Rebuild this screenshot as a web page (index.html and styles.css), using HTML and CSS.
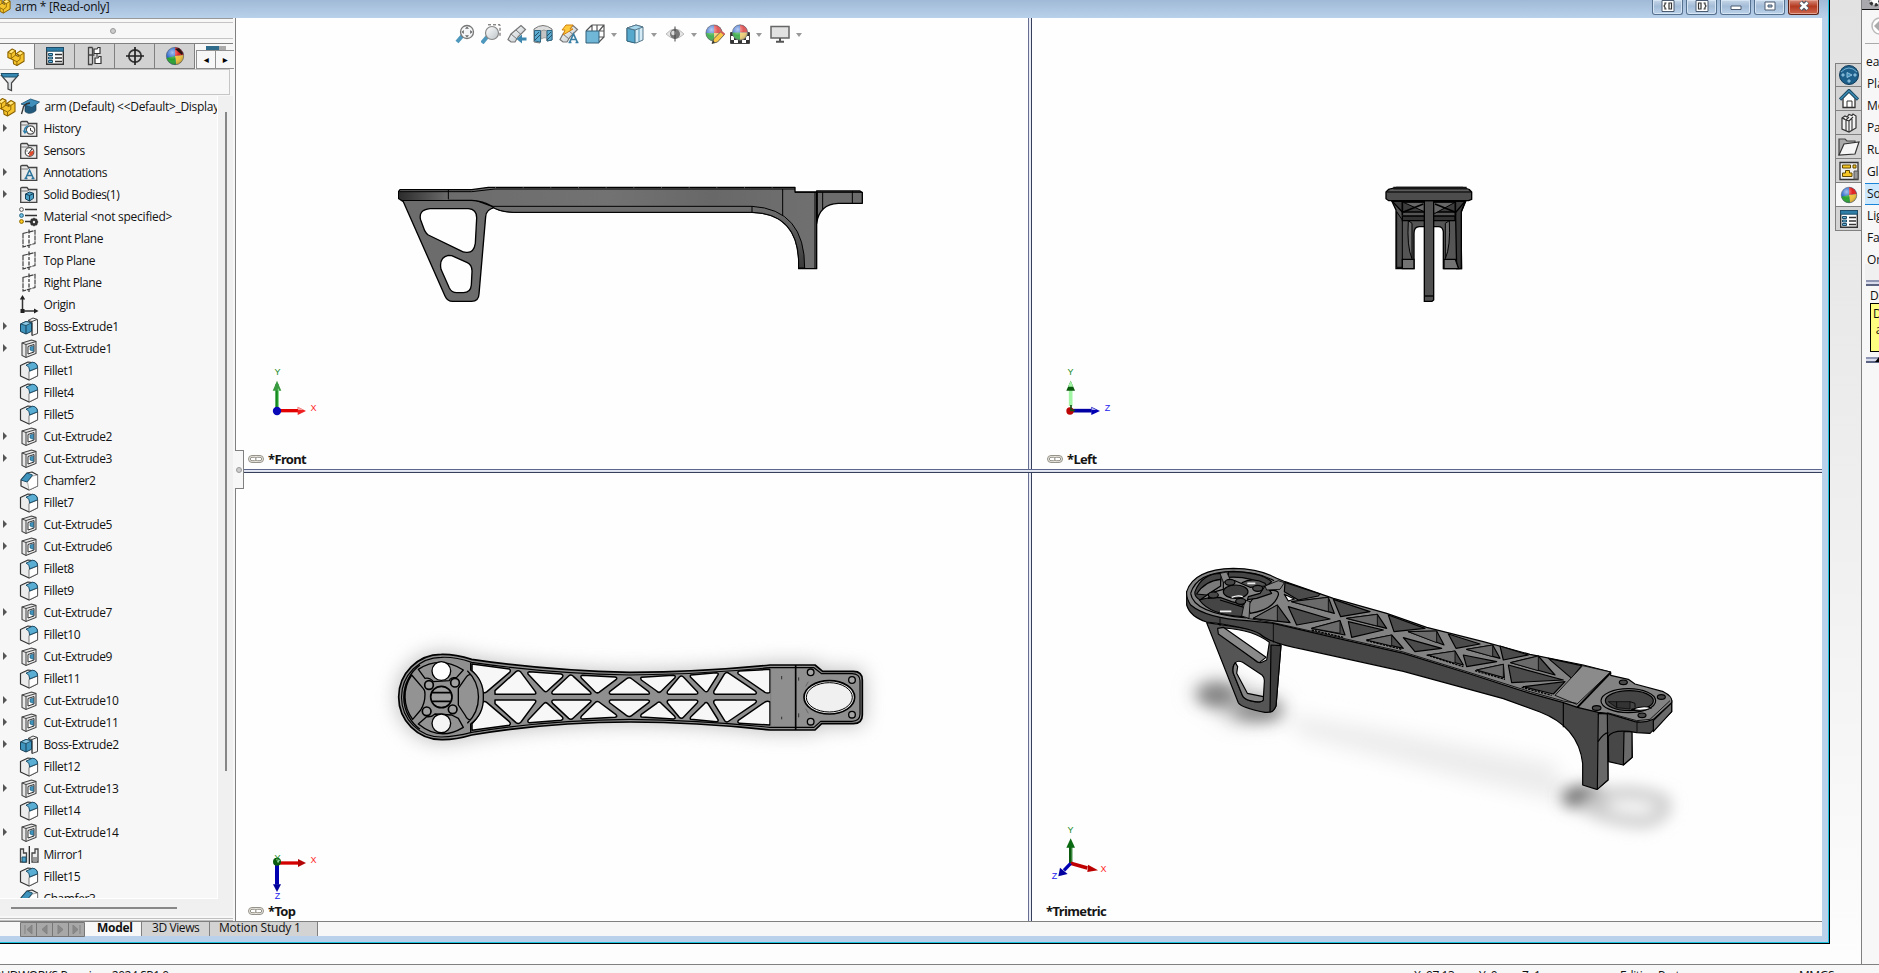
FILE: index.html
```html
<!DOCTYPE html>
<html lang="en">
<head>
<meta charset="utf-8">
<title>arm * [Read-only]</title>
<link rel="stylesheet" href="styles.css">
</head>
<body>
<svg class="defs" width="0" height="0">
  <defs>
    <linearGradient id="gBeam" x1="0" x2="1" y1="0" y2="0"><stop offset="0" stop-color="#6a6a6a"/><stop offset=".5" stop-color="#727272"/><stop offset=".75" stop-color="#686868"/><stop offset="1" stop-color="#707070"/></linearGradient>
    <linearGradient id="gHead" x1="0" x2="1" y1="0" y2="0"><stop offset="0" stop-color="#2c2c2c"/><stop offset="1" stop-color="#6c6c6c"/></linearGradient>
    <linearGradient id="gUnder" x1="0" x2="0" y1="0" y2="1"><stop offset="0" stop-color="#707070"/><stop offset="1" stop-color="#3a3a3a"/></linearGradient>
    <linearGradient id="gGlass" x1="0" x2="1" y1="0" y2="1"><stop offset="0" stop-color="#fff"/><stop offset="1" stop-color="#bcc4c8"/></linearGradient>
    <radialGradient id="gShine" cx=".35" cy=".3" r=".8"><stop offset="0" stop-color="#fff" stop-opacity=".6"/><stop offset=".5" stop-color="#fff" stop-opacity="0"/><stop offset="1" stop-color="#000" stop-opacity=".3"/></radialGradient>
    <filter id="soft" x="-30%" y="-60%" width="160%" height="220%"><feGaussianBlur stdDeviation="28"/></filter>
    <filter id="soft2" x="-60%" y="-60%" width="220%" height="220%"><feGaussianBlur stdDeviation="22"/></filter>

    <symbol id="part" viewBox="0 0 20 20"><path d="M2 5 6.500 1.500 10 3.300V8l3 1.500V8L10.800 6.500 15 3.500l4 2.200v8.800L11.500 19 8 17.200 7.500 13 2 10.500z" fill="#f5c42c" stroke="#8a6100" stroke-width="1.100" stroke-linejoin="round"/><path d="M2 5l3.500 1.700L10 3.300M5.500 6.700v5.500M11 6.700l3.800 1.800L19 5.700M14.800 8.500v4L11.500 15V19M5.500 11.500 10 8M11.500 15l-4-2" fill="none" stroke="#8a6100" stroke-width=".9"/><path d="M3.300 4.900l3.200-2.300 2 .9-3.100 2.200zM12.200 6.500l2.900-1.900 2.400 1.200-2.800 1.600z" fill="#ffe98a"/></symbol>
    <symbol id="cap" viewBox="0 0 20 20"><path d="M5 8.500v6c3 3 8 2 11-1V8z" fill="#215a7c" stroke="#163c55" stroke-width=".7"/><path d="M1 7 10.500 2 19.500 5 12 10.500z" fill="#3f8fba" stroke="#1b4e6e" stroke-width=".8"/><path d="M10 6Q3 7 3 12l-1.500 5" fill="none" stroke="#333" stroke-width="1.300"/></symbol>
    <symbol id="folder" viewBox="0 0 20 20"><path d="M1.700 17.300V3.200L3 2.500h5l1.500 2h8.300v12.800z" fill="#e9e9e9" stroke="#444" stroke-width="1.300"/><path d="M2 6h7l1-1.200" fill="none" stroke="#777"/></symbol>
    <symbol id="history" viewBox="0 0 20 20"><use href="#folder"/><circle cx="11.500" cy="11" r="4.200" fill="#fff" stroke="#555" stroke-width="1.200"/><path d="M11.500 9v2.500l2.500 1" stroke="#333" fill="none"/><path d="M5.500 12a5 5 0 0 1 4-5" fill="none" stroke="#2f81ab" stroke-width="1.500"/><path d="M3.500 11.500l2.300 3.500L9 12z" fill="#2f81ab"/></symbol>
    <symbol id="sensor" viewBox="0 0 20 20"><use href="#folder"/><circle cx="10.500" cy="11" r="4.300" fill="#fff" stroke="#555" stroke-width="1.200"/><path d="M10.500 11 14.500 9.500A4.300 4.300 0 0 1 10 15z" fill="#df4b2c"/><path d="M9 13l4-5M7.500 10h1" stroke="#222"/></symbol>
    <symbol id="anno" viewBox="0 0 20 20"><use href="#folder"/><path d="M6.500 15.500 10.500 7l4 8.500M8 12.500h5M5.500 15.500h3M12.500 15.500h3" fill="none" stroke="#2a7299" stroke-width="1.500"/></symbol>
    <symbol id="bodies" viewBox="0 0 20 20"><use href="#folder"/><path d="M6.500 9l4-2 4 1.300v5L10.500 16l-4-2z" fill="#4aa0c6" stroke="#163f55"/><path d="M6.500 9l4 1.500 4-2M10.500 10.500V16" fill="none" stroke="#163f55"/></symbol>
    <symbol id="material" viewBox="0 0 20 20"><path d="M6 2.500h12M6 8.500h12M6 14.500h6" stroke="#333" stroke-width="1.500"/><circle cx="2.500" cy="2.500" r="1.900" fill="#fff" stroke="#555"/><circle cx="2.500" cy="8.500" r="1.900" fill="#6fc0e4" stroke="#286785"/><circle cx="2.500" cy="14.500" r="1.900" fill="#ffc91f" stroke="#8c6a00"/><circle cx="15" cy="15" r="2.700" fill="none" stroke="#333" stroke-width="2.300"/><path d="M15 10.800v8.400M10.800 15h8.400M12 12l6 6M18 12l-6 6" stroke="#333" stroke-width="1.300"/><circle cx="15" cy="15" r="1.200" fill="#eee"/></symbol>
    <symbol id="plane" viewBox="0 0 20 20"><path d="M4 4.500 16 1.500v13L4 18z" fill="#fafafa" stroke="#444" stroke-width="1.200" stroke-dasharray="5 .8"/><path d="M10 .5V19" stroke="#333" stroke-width="1.200" stroke-dasharray="4 1.500 3 1.500"/></symbol>
    <symbol id="origin" viewBox="0 0 20 20"><path d="M3.500 3v13H17" fill="none" stroke="#333" stroke-width="1.500"/><path d="M3.500 0 .8 4.500h5.400zM19.500 16 15 13.400v5.200zM1.500 14h4v4h-4z" fill="#222"/></symbol>
    <symbol id="boss" viewBox="0 0 20 20"><path d="M9 3.500l5-2.500 4.500 1.500v14L13 18.500V6z" fill="#f4f4f4" stroke="#444"/><path d="M13 4.500v14M9 3.500l4 1 5-2" fill="none" stroke="#444"/><path d="M1.500 7 7 4.500l5.500 1.300v8.500L7 17l-5.500-2.500z" fill="#3f94bd" stroke="#173f56"/><path d="M1.500 7 7 8.500l5.500-2.700L7 4.500z" fill="#8ccae6" stroke="#173f56" stroke-width=".8"/><path d="M7 8.500V17" stroke="#173f56"/></symbol>
    <symbol id="cut" viewBox="0 0 20 20"><path d="M3 4 12.500 1 17 2.500v12L7 18.500 3 16.500z" fill="#e8e8e8" stroke="#444" stroke-width="1.100"/><path d="M3 4l4 1.500v13M7 5.500l10-3" fill="none" stroke="#444"/><path d="M9 7.500l6-2v7.500l-6 2z" fill="#fff" stroke="#333"/><path d="M11 8l3.500-1v5.500L11 11z" fill="#3f94bd" stroke="#1d516d" stroke-width=".6"/></symbol>
    <symbol id="fillet" viewBox="0 0 20 20"><path d="M1.500 4.500 9 1l6 .8c3 1.200 3.500 3 3.500 5v8L10 19l-8.500-4z" fill="#ececec" stroke="#333" stroke-width="1.200" stroke-linejoin="round"/><path d="M10 10.500V19l8.500-4.200V7z" fill="#fff" stroke="#444" stroke-width=".7"/><path d="M7 4.200 13.500 1.200C17 1.500 18.500 4 18.500 6.800L10.500 10C10.500 7 9.500 5 7 4.200z" fill="#5baed3" stroke="#1d516d"/></symbol>
    <symbol id="chamfer" viewBox="0 0 20 20"><path d="M2 9 8 2l5-1 5.500 3v11L10 19l-8-4z" fill="#efefef" stroke="#333" stroke-width="1.200" stroke-linejoin="round"/><path d="M8.500 11 13.500 5l5-1v11L10 19z" fill="#fff" stroke="#777" stroke-width=".6"/><path d="M2 9 8 2l5.500 2L8 11z" fill="#3f94bd" stroke="#1d516d"/></symbol>
    <symbol id="mirror" viewBox="0 0 20 20"><path d="M1.500 4h3v4h3v9h-6zM19 4h-3v4h-3v9h6z" fill="#eee" stroke="#444" stroke-width="1.300"/><path d="M3 12h4v5H3z" fill="#4aa0c6" stroke="#1d516d"/><path d="M14 12h4v5h-4z" fill="#999"/><path d="M10.300 1v18" stroke="#111" stroke-width="1.200"/></symbol>
    <symbol id="sheet" viewBox="0 0 20 20"><path d="M1.700 1.700h16.600v16.600H1.700z" fill="#fff" stroke="#333" stroke-width="1.400"/><path d="M1.500 1.500h17v3.700h-17z" fill="#2f7ea8" stroke="#1d4d68"/><path d="M3.500 7.500h4v2h-4zM3.500 11h4v2h-4zM3.500 14.500h4v2h-4z" fill="#6bb6da" stroke="#1d4d68"/><path d="M10 8.500h7M10 12h7M10 15.500h7" stroke="#333" stroke-width="1.400"/></symbol>
    <symbol id="ball" viewBox="0 0 20 20"><circle cx="10" cy="10" r="8.700" fill="#2463cc"/><path d="M10 10V1.300A8.700 8.700 0 0 1 18.600 9z" fill="#e21e1e"/><path d="M10 10l8.700-1A8.700 8.700 0 0 1 11 18.600z" fill="#f0c23a"/><path d="M10 10l1 8.600A8.700 8.700 0 0 1 1.500 12z" fill="#27a22e"/><circle cx="10" cy="10" r="8.700" fill="url(#gShine)" stroke="#555" stroke-width=".5"/></symbol>
    <symbol id="ball2" viewBox="0 0 20 20"><circle cx="10" cy="10" r="9" fill="#4f7fd6"/><path d="M10 10V1A9 9 0 0 1 19 10z" fill="#e25656"/><path d="M10 10h9A9 9 0 0 1 10 19z" fill="#f0d27c"/><path d="M10 10v9A9 9 0 0 1 1 10z" fill="#46b254"/><circle cx="10" cy="10" r="9" fill="url(#gShine)" stroke="#666" stroke-width=".7"/></symbol>
    <symbol id="link" viewBox="0 0 48 24"><rect x="1.500" y="1.500" width="45" height="21" rx="10.500" fill="#e8e6df" stroke="#96938a" stroke-width="3"/><rect x="7" y="7" width="18" height="10" rx="5" fill="#fff" stroke="#96938a" stroke-width="3"/><rect x="23" y="7" width="18" height="10" rx="5" fill="#fff" stroke="#96938a" stroke-width="3"/></symbol>
    <symbol id="cyl" viewBox="0 0 20 20"><path d="M1 15.500 4 10 14 1.500l4.500 4L11 13l-3 5H4z" fill="url(#gGlass)" stroke="#777" stroke-width="1.200"/><path d="M4 10l6 5M9 6l5 4.500" stroke="#777"/></symbol>
  </defs>
</svg>

<div class="desktop">
  <div class="upper">
    <div class="doc">
      <header class="titlebar">
        <svg class="t-icon" width="18" height="18"><use href="#part"/></svg>
        <span class="t-text">arm * [Read-only]</span>
        <div class="winbtns">
          <span class="wb"><svg width="14" height="12" viewBox="0 0 14 12"><path d="M1 .5h12v11H1z" fill="#fff" stroke="#4a5a70"/><path d="M5.500 3H4v1.500L3 6l1 1.500V9h1.500M8 3h2.500v6H8z" fill="none" stroke="#333" stroke-width="1.200"/></svg></span>
          <span class="wb"><svg width="14" height="12" viewBox="0 0 14 12"><path d="M1 .5h12v11H1z" fill="#fff" stroke="#4a5a70"/><path d="M8.500 3H10v1.500L11 6l-1 1.500V9H8.500M3.500 3H6v6H3.500z" fill="none" stroke="#333" stroke-width="1.200"/></svg></span>
          <span class="wb"><svg width="12" height="12"><path d="M1 6h10v3.500H1z" fill="#fff" stroke="#4a5a70"/></svg></span>
          <span class="wb"><svg width="12" height="12"><path d="M1 2h10v8H1zM4 5h4v2H4z" fill="#fff" fill-rule="evenodd" stroke="#4a5a70"/></svg></span>
          <span class="wb close"><svg width="12" height="12"><path d="M2.500 2 9.500 9.500M9.500 2 2.500 9.500" stroke="#4c5868" stroke-width="4.500"/><path d="M2.500 2.500 9.500 9M9.500 2.500 2.500 9" stroke="#fff" stroke-width="2.600"/></svg></span>
        </div>
      </header>

      <div class="body">
        <aside class="side">
          <div class="grip top"><i></i></div>
          <nav class="tabs">
            <span class="tab on"><svg width="19" height="20"><use href="#part"/></svg></span>
            <span class="tab"><svg width="20" height="20"><use href="#sheet"/></svg></span>
            <span class="tab"><svg width="20" height="20" viewBox="0 0 20 20"><path d="M3.500 1.500h4M3.500 1v17.500h4M3.500 9h6M7.500 1.500v16.500" fill="none" stroke="#444" stroke-width="1.300"/><path d="M9 3h3l1-1.500h2v6H9zM10 12h3l1-1.500h2v7h-6z" fill="#fff" stroke="#333" stroke-width="1.200"/><path d="M12 8v3" stroke="#333"/></svg></span>
            <span class="tab"><svg width="20" height="20" viewBox="0 0 20 20"><circle cx="10" cy="10" r="6.200" fill="none" stroke="#333" stroke-width="1.700"/><path d="M10 1v18M1 10h18" stroke="#222" stroke-width="1.700"/></svg></span>
            <span class="tab"><svg width="20" height="20" viewBox="0 0 20 20"><use href="#ball"/><path d="M10 3l4-1 4 5-1 2z" fill="#2a1512"/></svg></span>
            <span class="tab rest"><i class="peek"></i><b>◂</b><b>▸</b></span>
          </nav>
          <div class="filter"><svg width="20" height="20" viewBox="0 0 20 20"><path d="M1.500 3.500 8 11v6l3.500 1.500V11L18 3.500z" fill="url(#gGlass)" stroke="#444" stroke-width="1.200"/><path d="M1 1.500h17.500L17 5H3z" fill="#3689b2" stroke="#1d516d"/></svg></div>
          <div class="treewrap">
            <ul class="tree">
              <li class="root"><svg><use href="#part"/></svg><svg><use href="#cap"/></svg><span>arm (Default) &lt;&lt;Default&gt;_Display</span></li>
              <li class="ex"><svg><use href="#history"/></svg>History</li>
              <li><svg><use href="#sensor"/></svg>Sensors</li>
              <li class="ex"><svg><use href="#anno"/></svg>Annotations</li>
              <li class="ex"><svg><use href="#bodies"/></svg>Solid Bodies(1)</li>
              <li class="mat"><svg><use href="#material"/></svg>Material &lt;not specified&gt;</li>
              <li><svg><use href="#plane"/></svg>Front Plane</li>
              <li><svg><use href="#plane"/></svg>Top Plane</li>
              <li><svg><use href="#plane"/></svg>Right Plane</li>
              <li><svg><use href="#origin"/></svg>Origin</li>
              <li class="ex"><svg><use href="#boss"/></svg>Boss-Extrude1</li>
              <li class="ex"><svg><use href="#cut"/></svg>Cut-Extrude1</li>
              <li><svg><use href="#fillet"/></svg>Fillet1</li>
              <li><svg><use href="#fillet"/></svg>Fillet4</li>
              <li><svg><use href="#fillet"/></svg>Fillet5</li>
              <li class="ex"><svg><use href="#cut"/></svg>Cut-Extrude2</li>
              <li class="ex"><svg><use href="#cut"/></svg>Cut-Extrude3</li>
              <li><svg><use href="#chamfer"/></svg>Chamfer2</li>
              <li><svg><use href="#fillet"/></svg>Fillet7</li>
              <li class="ex"><svg><use href="#cut"/></svg>Cut-Extrude5</li>
              <li class="ex"><svg><use href="#cut"/></svg>Cut-Extrude6</li>
              <li><svg><use href="#fillet"/></svg>Fillet8</li>
              <li><svg><use href="#fillet"/></svg>Fillet9</li>
              <li class="ex"><svg><use href="#cut"/></svg>Cut-Extrude7</li>
              <li><svg><use href="#fillet"/></svg>Fillet10</li>
              <li class="ex"><svg><use href="#cut"/></svg>Cut-Extrude9</li>
              <li><svg><use href="#fillet"/></svg>Fillet11</li>
              <li class="ex"><svg><use href="#cut"/></svg>Cut-Extrude10</li>
              <li class="ex"><svg><use href="#cut"/></svg>Cut-Extrude11</li>
              <li class="ex"><svg><use href="#boss"/></svg>Boss-Extrude2</li>
              <li><svg><use href="#fillet"/></svg>Fillet12</li>
              <li class="ex"><svg><use href="#cut"/></svg>Cut-Extrude13</li>
              <li><svg><use href="#fillet"/></svg>Fillet14</li>
              <li class="ex"><svg><use href="#cut"/></svg>Cut-Extrude14</li>
              <li><svg><use href="#mirror"/></svg>Mirror1</li>
              <li><svg><use href="#fillet"/></svg>Fillet15</li>
              <li><svg><use href="#chamfer"/></svg>Chamfer3</li>
            </ul>
            <div class="vbar"><i></i></div>
          </div>
          <div class="hbar"><i></i></div>
          <div class="grip bottom"></div>
        </aside>

        <main class="views">
          <section class="pane">
            <svg class="model" style="left:144px;top:152px" width="500" height="150" viewBox="0 0 1500 450" stroke="#000" stroke-width="4" stroke-linejoin="round">
              <path d="M70 95 195 378Q202 394 218 394H275Q296 394 297 372L317 140Q318 118 345 112L280 88H60zM150 116H265Q291 118 290 145L286 220Q282 247 262 247 250 248 240 241L145 195Q138 190 134 182L122 150Q114 120 150 116zM215 257 262 278Q277 286 276 305L274 345Q272 368 250 368H230Q215 368 208 354L183 298Q176 262 205 256z" fill="#6c6c6c" fill-rule="evenodd"/>
              <path d="M56 64 60 59H275L325 52H1245V66H1310V296H1256V270Q1250 130 1116 127H400Q355 125 335 108 305 92 275 91H70L56 86z" fill="url(#gBeam)"/>
              <path d="M57 66H205V90H66L57 84z" fill="url(#gHead)" stroke="none"/>
              <path d="M335 109H1116Q1275 118 1274 294H1256V270Q1250 130 1116 127H400Q355 125 335 109z" fill="url(#gUnder)" stroke-width="3"/>
              <path d="M1310 63H1440L1447 68V100H1375Q1318 102 1310 160z" fill="#6c6c6c"/>
              <path d="M58 65H275L345 57H1245M205 60V88M1208 57V136M1245 67H1447M1305 67V294M1312 67V150M1328 67V118M1417 63V100M1116 109V127" fill="none" stroke-width="3"/>
              <path d="M345 53H1240" stroke="#888" stroke-width="2" stroke-dasharray="3 80" fill="none"/>
            </svg>
            <svg class="triad" style="left:31px;top:348px" width="56" height="56" viewBox="0 0 168 168"><path d="M30 55V130" stroke="#138a1c" stroke-width="10"/><path d="M30 44 17 74h26z" fill="#3a9a3f"/><path d="M34 68V125" stroke="#8de093" stroke-width="3"/><path d="M32 134H95" stroke="#e30000" stroke-width="10"/><path d="M117 135 92 122v25z" fill="#e22"/><path d="M93 123l17 9H93z" fill="#f6a0a0"/><circle cx="30" cy="135" r="12.500" fill="#0909b8"/></svg>
            <span class="ax g" style="left:38px;top:348px">Y</span><span class="ax r" style="left:74px;top:384px">X</span>
            <div class="label"><svg width="16" height="8"><use href="#link"/></svg><b>*Front</b></div>
          </section>
          <div class="vs"></div>
          <section class="pane">
            <svg class="model" style="left:308px;top:152px" width="180" height="150" viewBox="0 0 540 450" stroke="#000" stroke-width="4">
              <path d="M155 92H378L362 130 365 296H310V185Q308 170 295 170H238Q222 170 222 190V296H168V120z" fill="#555"/>
              <path d="M346 92H376L364 125V296H350z" fill="#3a3a3a"/><path d="M170 125 187 150V292H170z" fill="#4e4e4e" stroke-width="3"/>
              <path d="M187 268H222V296H187zM312 268H346L356 296H312z" fill="#727272"/>
              <path d="M187 138H345V152H187z" fill="#333"/><path d="M205 152Q200 230 216 266V160zM328 152Q332 230 316 266V160z" fill="#6b6b6b" stroke-width="3"/>
              <path d="M157 94 187 126H255V94zM375 94 348 126H280V94z" fill="#3d3d3d"/><path d="M190 97H345L285 130 255 126z" fill="#686868" stroke-width="3"/><path d="M190 126 250 102M345 126 285 102M187 94V136M346 94V136" fill="none" stroke-width="5"/>
              <path d="M253 92H281V390L276 394H253z" fill="#505050"/><path d="M253 378H281" fill="none"/>
              <path d="M138 66 146 58 170 52H368L388 59 395 66V88L386 92H146L138 86z" fill="#4d4d4d"/>
              <path d="M160 55H380" stroke="#151515" stroke-width="9" fill="none"/><path d="M140 66H393" stroke-width="3"/><path d="M150 60H386" stroke="#888" stroke-width="1.500"/>
            </svg>
            <svg class="triad" style="left:28px;top:348px" width="56" height="56" viewBox="0 0 168 168"><path d="M32 60V120" stroke="#a2f5a4" stroke-width="11"/><path d="M32 44 19 74h26z" fill="#0a5a0d"/><path d="M32 44l-8 18h16z" fill="#a2f5a4"/><path d="M34 134H95" stroke="#0000a5" stroke-width="11"/><path d="M120 135 94 122v25z" fill="#0000b5"/><path d="M95 124l14 8H95z" fill="#a9a9ee"/><circle cx="30" cy="135" r="11" fill="#bd0505"/><path d="M33 117v16h12" stroke="#174d17" stroke-width="5" fill="none"/></svg>
            <span class="ax g" style="left:35px;top:348px">Y</span><span class="ax b" style="left:72px;top:384px">Z</span>
            <div class="label"><svg width="16" height="8"><use href="#link"/></svg><b>*Left</b></div>
          </section>
          <div class="hs"></div>
          <section class="pane">
            <svg class="model" style="left:144px;top:167px" width="500" height="120" viewBox="0 0 1500 360" stroke="#000" stroke-width="4" stroke-linejoin="round">
              <path d="M184 43Q225 42 275 60 500 96 750 100 960 98 1170 75H1305L1328 94H1420Q1447 94 1447 120V225Q1447 251 1420 251H1325L1305 270H1170Q960 244 750 243 500 245 275 285 225 300 184 299A128 128 0 0 1 184 43z" fill="#888" stroke="#888" stroke-width="16" opacity=".5" filter="url(#soft)"/>
              <path d="M184 43Q225 42 275 58 500 92 750 97 960 96 1170 75H1305L1328 94H1420Q1447 94 1447 120V225Q1447 251 1420 251H1325L1305 270H1170Q960 247 750 246 500 247 275 285 225 300 184 299A128 128 0 0 1 184 43z" fill="#8f8f8f" stroke-width="5"/>
              <path d="M184 52Q225 50 275 67 500 100 750 105 960 103 1170 83H1302L1325 101H1416Q1439 101 1440 122V223Q1439 244 1416 244H1322L1302 262H1170Q960 240 750 238 500 240 275 277 225 290 184 291A119 119 0 0 1 184 52z" fill="none" stroke-width="3.500"/>
              <g id="truss" fill="#f7f7f7" stroke-width="4.500">
                <path d="M276 72 388 87Q394 92 388 98L321 155Q312 162 307 154 303 118 276 92z"/>
                <path d="M345 163V152L408 95Q416 89 423 97L466 155Q470 163 462 163z"/>
                <path d="M448 95 543 102Q552 105 547 112L502 153Q496 158 490 151L444 102Q442 96 448 95z"/>
                <path d="M520 163Q512 160 518 153L566 108Q573 102 580 109L630 155Q637 162 628 163z"/>
                <path d="M607 106 705 111Q714 113 708 119L657 157Q651 161 645 155L604 114Q600 107 607 106z"/>
                <path d="M692 163Q685 160 690 154L740 116Q748 110 756 117L806 155Q812 162 803 163z"/>
                <path d="M785 112 880 106Q889 107 884 114L842 155Q836 160 830 153L784 120Q780 113 785 112z"/>
                <path d="M866 163Q859 160 863 153L898 111Q905 105 911 112L952 155Q956 162 948 163z"/>
                <path d="M933 105 1009 98Q1018 99 1013 106L984 152Q978 159 973 152L932 112Q929 106 933 105z"/>
                <path d="M1006 163Q999 160 1002 153L1034 101Q1040 94 1047 100L1124 152Q1134 160 1125 163z"/>
                <path d="M1078 93 1170 88V157Q1163 161 1155 157L1075 102Q1071 96 1078 93z"/>
              </g>
              <use href="#truss" transform="matrix(1 0 0 -1 0 343)"/>
              <path d="M272 68V90Q312 120 310 171 312 222 272 252V278" fill="#8f8f8f"/><circle cx="184" cy="171" r="110" fill="#939393" stroke="none"/>
              <path d="M262 92A110 110 0 0 1 262 250M120 75A120 120 0 0 0 120 268M135 163Q135 150 130 146L95 105A114 114 0 0 0 98 238L122 210Q135 190 135 163zM270 103Q262 105 258 112L235 145V195L255 225Q262 240 272 240M115 88Q180 45 250 90L230 112Q210 112 208 122L160 125Q150 112 135 115zM115 252Q180 305 250 262L235 235 215 225 165 222Q155 232 140 230z" fill="none"/>
              <circle cx="184" cy="93" r="28" fill="#fff"/><circle cx="184" cy="250" r="28" fill="#f4f4f4"/>
              <g fill="#a0a0a0" stroke-width="5"><circle cx="147" cy="135" r="13"/><circle cx="225" cy="128" r="13"/><circle cx="140" cy="214" r="13"/><circle cx="218" cy="208" r="13"/><circle cx="184" cy="171" r="32"/></g><path d="M155 158H213M155 184H213" stroke-width="5"/>
              <path d="M1247 75V270" stroke-width="5"/><path d="M1172 85V260" stroke="#777" stroke-width="2"/><ellipse cx="1348" cy="172" rx="76" ry="50" fill="#f0f0f0" stroke-width="5"/><ellipse cx="1348" cy="172" rx="69" ry="44" fill="none" stroke-width="3"/>
              <g fill="#a5a5a5"><circle cx="1292" cy="97" r="10"/><circle cx="1292" cy="245" r="10"/><circle cx="1416" cy="120" r="10"/><circle cx="1416" cy="224" r="10"/></g>
              <path d="M1205 108v10M1205 230v8M1256 112v10M1256 220v12" stroke-width="2" fill="none"/><path d="M1285 125l-8 14M1285 220l-8-14" stroke="#555" stroke-width="2" fill="none"/>
            </svg>
            <svg class="triad" style="left:31px;top:377px" width="56" height="56" viewBox="0 0 168 168"><path d="M32 39H95" stroke="#d40000" stroke-width="10"/><path d="M117 39 93 27v24z" fill="#b30505"/><path d="M30 44V104" stroke="#0000b0" stroke-width="12"/><path d="M30 126 18 103h24z" fill="#00009a"/><circle cx="30" cy="35" r="12" fill="#0a5a10"/><path d="M27 26l12 4-6 10z" fill="#9bd99d"/></svg>
            <span class="ax g" style="left:38px;top:379px">Y</span><span class="ax r" style="left:74px;top:381px">X</span><span class="ax b" style="left:38px;top:417px">Z</span>
            <div class="label low"><svg width="16" height="8"><use href="#link"/></svg><b>*Top</b></div>
          </section>
          <div class="vs"></div>
          <section class="pane">
            <svg class="model" style="left:138px;top:77px" width="520" height="290" viewBox="0 0 1560 870" stroke="#000" stroke-width="3.500" stroke-linejoin="round">
              <g stroke="none"><g filter="url(#soft)"><path d="M60 430Q130 350 240 420L340 450 330 510 200 520z" fill="#bbb"/><path d="M340 490 640 540 1150 640 1200 760 900 690 400 560z" fill="#ececec"/></g><g filter="url(#soft2)"><ellipse cx="140" cy="435" rx="55" ry="28" fill="#7c7c7c"/><ellipse cx="265" cy="482" rx="70" ry="26" fill="#888"/><ellipse cx="1250" cy="742" rx="75" ry="36" fill="#6c6c6c"/><path d="M1250 770Q1330 700 1480 750 1500 800 1420 815 1300 805 1250 770z" fill="none" stroke="#ccc" stroke-width="40"/></g></g>
              <path d="M110 218 205 458Q212 472 285 487 308 490 318 468L333 285 260 240zM165 234Q250 240 298 277L290 330 272 338 262 336 150 250zM196 338Q205 330 218 337L276 375Q284 382 283 395L280 447Q275 462 240 452 222 448 217 436L190 370Q186 350 196 338z" fill="#555" fill-rule="evenodd"/>
              <path d="M303 285 333 287 318 468Q310 487 300 486z" fill="#3c3c3c"/>
              <path d="M143 235 160 232 288 322 268 338 262 335 145 252z" fill="#8a8a8a"/>
              <path d="M196 338 203 350 200 370 232 430 280 440V450Q275 460 240 452 222 448 217 436L190 370Q186 350 196 338z" fill="#858585"/>
              <path d="M1314 540H1385L1387 622 1360 645 1316 635z" fill="#474747"/><path d="M1362 545H1386V622L1360 645z" fill="#6a6a6a"/>
              <path d="M50 125V165Q60 200 110 216 240 232 270 252 300 280 400 298L700 364 1000 446 1110 486Q1225 530 1238 640V705L1280 718 1314 690V560Q1330 535 1400 548L1440 550 1505 485V450L1285 480 800 290 230 190z" fill="#474747"/>
              <path d="M1285 490 1312 492 1314 690 1282 718z" fill="#686868"/><path d="M1180 458V532M1284 575Q1300 550 1315 548" fill="none"/>
              <path d="M1450 512 1505 458V485L1450 545z" fill="#6a6a6a"/>
              <path d="M50 125Q70 58 190 55 270 56 320 85L345 95 490 145 650 190 770 232 940 275 1080 313 1240 345 1322 366V376L1375 388 1395 402 1480 425Q1510 440 1505 458L1450 508Q1425 520 1395 515L1312 490 1285 487 1222 472 1180 458 1080 430 900 372 700 310 480 260 310 220 230 212Q110 205 62 165 48 145 50 125z" fill="#838383"/>
              <path d="M62 130Q80 66 190 64 265 65 312 92M62 130Q70 190 230 204" fill="none"/>
              <path d="M75 125Q95 70 155 70L150 108 90 150Q72 140 75 125zM175 65Q270 65 305 95L290 108Q240 78 175 82zM88 150 150 135 235 180 220 200Q120 195 88 150z" fill="#454545"/>
              <path d="M80 132Q105 92 152 88V108L110 135zM260 130Q330 110 325 135 310 180 240 190L235 165z" fill="#7b7b7b"/><path d="M215 98Q250 80 285 100L305 130 260 145 225 150 215 170 150 150" fill="#555"/>
              <path d="M160 95 195 92 240 112 285 108 270 130 235 140 228 165 185 155 150 142 115 145 125 128 160 118z" fill="#858585"/>
              <path d="M150 70 170 66 182 92 160 97zM225 150 240 155 237 205 215 198zM285 108 325 92 343 98 330 118 290 120z" fill="#858585" stroke-width="2.500"/>
              <ellipse cx="197" cy="125" rx="37" ry="20" fill="#3f3f3f"/><path d="M185 142Q205 134 218 140" fill="none" stroke="#fff" stroke-width="4"/><g fill="#484848"><ellipse cx="180" cy="97" rx="15" ry="9"/><ellipse cx="263" cy="115" rx="15" ry="9"/><ellipse cx="130" cy="135" rx="15" ry="9"/><ellipse cx="212" cy="154" rx="15" ry="9"/></g><path d="M150 184h34M232 100h24" stroke="#eee" stroke-width="5"/>
              <g fill="#4b4b4b">
                <path d="M345 97 450 132 445 138 385 150 343 125z"/><path d="M490 148 600 185 512 200z"/><path d="M655 195 765 235 672 245z"/><path d="M835 252 930 282 858 295z"/><path d="M990 288 1075 315 1000 330z"/><path d="M1135 325 1235 347 1205 385z"/>
                <path d="M365 155 475 142 493 190z"/><path d="M530 205 622 193 650 235z"/><path d="M715 245 800 243 822 285z"/><path d="M890 298 968 285 990 325z"/><path d="M1022 338 1105 318 1155 375z"/>
                <path d="M355 170 480 207 380 225z"/><path d="M535 215 640 240 545 262z"/><path d="M700 263 815 295 735 305z"/><path d="M880 315 980 335 890 350z"/><path d="M1015 345 1180 390 1025 398z"/>
                <path d="M250 205 322 165 360 218z"/><path d="M425 235 510 212 525 255z"/><path d="M590 270 665 255 700 295z"/><path d="M775 315 855 303 880 345z"/><path d="M920 360 1000 343 1003 383z"/><path d="M1060 410 1185 395 1150 432z"/>
              </g>
              <g fill="#6a6a6a" stroke-width="2.500"><path d="M365 155 475 142V185z"/><path d="M530 205 622 193V228z"/><path d="M715 245 800 243V278z"/><path d="M890 298 968 285V320z"/><path d="M1022 338 1105 318V362z"/><path d="M425 235 510 212V250z"/><path d="M590 270 665 255V288z"/><path d="M775 315 855 303V340z"/><path d="M920 360 1000 343V382z"/><path d="M250 205 322 165V213z"/></g>
              <path d="M343 133l30 14-18 6z" fill="#fff"/>
              <path d="M425 240 520 262M590 272 695 298M770 315 880 350M915 362 1005 388M1055 412 1145 436" stroke-dasharray="7 3" stroke-width="4" fill="none"/>
              <path d="M1238 347 1322 366 1220 463 1155 436z" fill="#8b8b8b" stroke-width="2.500"/><path d="M1322 368 1222 472" stroke-width="6"/>
              <path d="M232 205 310 218 480 256 700 306 900 368 1080 425 1180 453 1220 460M1285 487V495M1312 488 1400 512 1440 508 1500 452M1401 515V547M150 205V228M310 220V278" fill="none" stroke-width="2.500"/>
              <ellipse cx="1375" cy="452" rx="82" ry="36" fill="#838383"/><ellipse cx="1378" cy="452" rx="72" ry="30" fill="#454545"/><path d="M1385 478Q1420 465 1444 474 1420 485 1385 478z" fill="#fff"/><path d="M1315 455h65v22l-40-4z" fill="#333" stroke-width="2"/><path d="M1340 455v17M1380 455 1395 460V472" fill="none" stroke-width="2.500"/>
              <g fill="#484848"><ellipse cx="1360" cy="397" rx="12" ry="7"/><ellipse cx="1474" cy="441" rx="12" ry="7"/><ellipse cx="1280" cy="474" rx="13" ry="7"/><ellipse cx="1416" cy="496" rx="12" ry="7"/></g>
            </svg>
            <svg class="triad" style="left:18px;top:362px" width="60" height="50" viewBox="0 0 180 150"><path d="M62 30V85" stroke="#0b5a10" stroke-width="10"/><path d="M65 28V83" stroke="#5fae62" stroke-width="2"/><path d="M62 10 49 38h26z" fill="#0a6a12"/><path d="M62 85 112 99" stroke="#c00000" stroke-width="11"/><path d="M144 106 114 89l-2 22z" fill="#b00"/><path d="M62 85 42 106" stroke="#0000b5" stroke-width="10"/><path d="M25 124 30 98l23 19z" fill="#0000a0"/></svg>
            <span class="ax g" style="left:35px;top:351px">Y</span><span class="ax r" style="left:68px;top:390px">X</span><span class="ax b" style="left:19px;top:397px">Z</span>
            <div class="label low"><b>*Trimetric</b></div>
          </section>

          <div class="toolbar">
            <svg width="20" height="20" viewBox="0 0 20 20"><path d="M2 18 8 11" stroke="#4f98bd" stroke-width="4"/><circle cx="12" cy="8" r="6.500" fill="#f3f5f6" stroke="#777" stroke-width="1.300"/><path d="M12 2.500l2 2.300h-4zM12 13.500l2-2.300h-4zM6.500 8l2.300-2v4zM17.500 8l-2.300-2v4z" fill="#666"/></svg>
            <svg width="20" height="20" viewBox="0 0 20 20"><path d="M7 .8h12v12" fill="none" stroke="#555" stroke-dasharray="3 2"/><path d="M1 19 6 13" stroke="#4f98bd" stroke-width="4"/><circle cx="11" cy="9" r="6.500" fill="url(#gGlass)" stroke="#888" stroke-width="1.200"/></svg>
            <svg width="20" height="20" viewBox="0 0 20 20"><use href="#cyl"/><path d="M19.500 13.500H15v-3L9.500 15l5.500 4.500v-3h4.500z" fill="#3d87ae"/></svg>
            <svg width="20" height="20" viewBox="0 0 20 20"><path d="M1 5q9-7 18 0v11l-5 1V10q-1-2-4-2t-3 2v9l-6-1z" fill="#ddd" stroke="#777"/><path d="M8 7q3-2 6 0v7q-3-1-6 1z" fill="#c4c4c4" stroke="#888" stroke-width=".7"/><path d="M1.500 6.500H7.500V18l-6-1zM14 6.500h5V16l-5 1z" fill="#5cacd2" stroke="#2f6682"/><path d="M2 12l4-4M2 16l5-5M14 12l4-4M14 16l5-5" stroke="#27506a"/></svg>
            <svg width="20" height="20" viewBox="0 0 20 20"><use href="#cyl"/><path d="M7 1h7l-3 4h3L4 11l2-5H3z" fill="#ffc93c" stroke="#d08012"/><path d="M10.500 18.500l4-8.500 4 8.500M12 15.500h5M9.500 18.500h3M16.500 18.500h3" fill="none" stroke="#3a7fa3" stroke-width="1.700"/></svg>
            <svg width="20" height="20" viewBox="0 0 20 20"><path d="M7 1h12v12l-5 5M7 1 1 7M19 1l-5 6M12 1v6M7 1v6M14 7h5M14 13h5" fill="none" stroke="#555" stroke-width="1.200"/><path d="M1 7h13v12H1z" fill="#70b6d6" stroke="#315f78"/></svg>
            <i class="dd"></i>
            <svg width="20" height="20" viewBox="0 0 20 20"><path d="M2 4l9-3 7 2v13l-7 3-9-2z" fill="#d5ecf6" stroke="#56768a"/><path d="M2 4l8 2v13l-8-2z" fill="#56a8cd" stroke="#36677f"/><path d="M2 4l9-3 7 2-8 3z" fill="#a7d7ec" stroke="#56768a"/><path d="M14 5v12" stroke="#4a8fb1"/></svg>
            <i class="dd"></i>
            <svg width="20" height="20" viewBox="0 0 20 20"><path d="M1 10q9-10 18 0-9 9-18 0z" fill="#e6e6e6" stroke="#bbb"/><circle cx="10" cy="10" r="5" fill="#777"/><circle cx="8.500" cy="9" r="2.300" fill="#ddd"/><path d="M10 2.500v15" stroke="#444" stroke-width="1"/></svg>
            <i class="dd"></i>
            <svg class="appear" width="20" height="20" viewBox="0 0 20 20"><use href="#ball2" width="18" height="18"/><path d="M7 19.500l2-5 7-7 3.500 3-7 7.500z" fill="#f9c846" stroke="#665"/><path d="M7 19.500l1-3 2 2z" fill="#333"/><path d="M16 7.500l3.500 3" stroke="#d06060" stroke-width="2"/></svg>
            <svg class="scene" width="20" height="20" viewBox="0 0 20 20"><path d="M.5 8.500h19v11H.5z" fill="#fff" stroke="#444"/><path d="M1 9h3v3H1zM4 13h3v3H4zM1 16h3v3H1zM8 16h4v3H8zM16 9h3v3h-3zM13 13h3v3h-3zM16 16h3v3h-3z" fill="#333"/><use href="#ball2" x="1.500" width="17" height="17"/></svg>
            <i class="dd"></i>
            <svg width="20" height="20" viewBox="0 0 20 20"><path d="M1 2.500h18v11.500H1z" fill="#e2e2e2" stroke="#666" stroke-width="1.500"/><path d="M10 14v3.500M6 17.700h8" stroke="#555" stroke-width="2"/></svg>
            <i class="dd"></i>
          </div>
          <div class="knob"><i></i></div>
        </main>
      </div>

      <footer class="sheets">
        <div class="nav"><svg width="65" height="15" viewBox="0 0 65 15"><path d="M.5 .5h64v14H.5zM16.500 0v15M32.500 0v15M48.500 0v15" fill="#a8a8a8" stroke="#777"/><path d="M5 3v9M12 3 7 7.500l5 4.500zM27 3l-5 4.500 5 4.500zM38 3l5 4.500-5 4.500zM53 3l5 4.500-5 4.500zM60 3v9" fill="#888" stroke="#838383"/></svg></div>
        <span class="sh on">Model</span><span class="sh s2">3D Views</span><span class="sh s3">Motion Study 1</span>
      </footer>
    </div>

    <div class="strip">
      <div class="stabs">
        <span><svg width="20" height="20" viewBox="0 0 20 20"><circle cx="10" cy="10" r="9.500" fill="#1d5f8b" stroke="#123b58"/><path d="M2 7q8-8 16 0" fill="none" stroke="#79afd0"/><path d="M8 7.500v5l5-2.500zM9 15h2v2H9zM3 9h2v2H3zM15 9h2v2h-2z" fill="#3f8fba" stroke="#a8d1e8" stroke-width=".8"/></svg></span>
        <span><svg width="20" height="20" viewBox="0 0 20 20"><path d="M4 9v9.500h12V9l-6-6z" fill="#fff" stroke="#333" stroke-width="1.300"/><path d="M1 10.500 10 1.500l9 9" fill="none" stroke="#1d4d68" stroke-width="3.200"/><path d="M1.500 10 10 1.800l8.500 8.200" fill="none" stroke="#3d92bc" stroke-width="1.200"/><path d="M8 18.500V12h5v6.500" fill="none" stroke="#333"/></svg></span>
        <span><svg width="20" height="20" viewBox="0 0 20 20"><path d="M3 5l3-2 2 1 2-2.500 3 1 1-1.500 3 2v12l-7 4-7-3z" fill="#f2f2f2" stroke="#333" stroke-width="1.200"/><path d="M3 5l4 2v11M7 7l3-3M7 7l3 1v11M10 8l4-4M13 6v11M3 5l3 1" fill="none" stroke="#333" stroke-width="1.100"/></svg></span>
        <span><svg width="22" height="20" viewBox="0 0 22 20"><path d="M1 18V2h6l2 2h8v4" fill="#aaa" stroke="#444" stroke-width="1.200"/><path d="M1 18 6 7l15-2-4 12z" fill="#f6f6f6" stroke="#333" stroke-width="1.200"/></svg></span>
        <span><svg width="20" height="20" viewBox="0 0 20 20"><path d="M1 1.500h18v17H1z" fill="#eee" stroke="#333" stroke-width="1.300"/><path d="M3.500 4h8v3h-8zM14 4h3v3h-3zM6.500 9.500h4v2.500h2.500v3.500H3.500V12h3z" fill="#f7c727" stroke="#604900"/><path d="M15 10h4v8h-4z" fill="#999" stroke="#555"/></svg></span>
        <span class="on"><svg width="18" height="18"><use href="#ball"/></svg></span>
        <span><svg width="20" height="20"><use href="#sheet"/></svg></span>
      </div>
    </div>

    <aside class="task">
      <div class="thead"><svg width="17" height="9"><circle cx="13" cy="0" r="5" fill="#fff" stroke="#333" stroke-width="3" stroke-dasharray="3 2"/></svg></div>
      <div class="tback"><svg width="14" height="34"><circle cx="15" cy="16" r="8" fill="#fff" stroke="#bbb" stroke-width="1.500"/><path d="M14 11l-5 5 5 5z" fill="#aaa"/></svg></div>
      <ul class="mats"><li>ear</li><li>Plastics</li><li>Metal</li><li>Painted</li><li>Rubber</li><li>Glass</li><li class="on">Solid</li><li>Lights</li><li>Fabric</li><li>Organic</li></ul>
      <div class="gap"></div><div class="bar"></div>
      <div class="dlabel">Dr</div>
      <div class="tip"><span>D</span><span>&nbsp;a</span></div>
      <div class="bar arrow"></div>
    </aside>
  </div>
  <div class="status"><span class="st0">SOLIDWORKS Premium 2024 SP1.0</span><span class="st1">X: 97.13mm</span><span class="st2">Y: 0mm</span><span class="st3">Z: 1mm</span><span class="st4">Editing Part</span><span class="st5">MMGS</span></div>
</div>
</body>
</html>
```
FILE: styles.css
```css
* { box-sizing: border-box; }
body { margin: 0; width: 1879px; height: 973px; overflow: hidden; background: #fdfdfd; font: 12px/22px "Open Sans", "Noto Sans", sans-serif; letter-spacing: -.42px; color: #111; }
ul { margin: 0; padding: 0; list-style: none; }
svg { display: block; flex: none; }
.defs { position: absolute; }
.desktop { display: flex; flex-direction: column; height: 973px; }
.upper { display: flex; height: 964px; flex: none; }

.doc { width: 1830px; height: 944px; flex: none; display: flex; flex-direction: column; background: #b9d1ea; border-right: 1px solid #000; border-bottom: 1px solid #000; box-shadow: inset -1px -1px 0 #1cc2e0; padding: 0 7px 7px 0; }
.titlebar { height: 18px; flex: none; display: flex; align-items: flex-start; background: linear-gradient(#a0b9d6, #b9d1ea); margin-right: -6px; padding-right: 9px; overflow: hidden; }
.t-icon { margin: -4px 0 0 -7px; }
.t-text { margin-left: 4px; font-size: 12px; line-height: 14px; letter-spacing: -.27px; }
.winbtns { display: flex; gap: 3px; margin-left: auto; }
.wb { width: 31px; height: 15px; border: 1px solid #56708f; border-top: 0; border-radius: 0 0 3px 3px; background: linear-gradient(#c6d6e8, #a3bcd7 45%, #bcd2ea); box-shadow: inset 0 0 0 1px #d6e5f4; display: flex; justify-content: center; }
.wb.close { background: linear-gradient(#d88d7c, #b33a20 45%, #cf6750); border-color: #5e2217; box-shadow: inset 0 0 0 1px #e4a392; }

.body { display: flex; height: 903px; flex: none; }
.side { width: 236px; flex: none; display: flex; flex-direction: column; background: #f7f7f7; border-right: 1px solid #808080; padding-right: 2px; }
.grip.top { height: 21px; flex: none; margin: 0 0 4px; border-top: 1px solid #999; border-bottom: 1px solid #c4c4c4; background: linear-gradient(#f7f7f7 3px, #c4c4c4 3px, #c4c4c4 4px, #f7f7f7 4px); display: flex; justify-content: center; align-items: center; padding: 5px 7px 0 0; }
.grip i, .knob i { width: 6px; height: 6px; border-radius: 50%; background: #ccc; border: 1px solid #999; }
.tabs { display: flex; height: 26px; flex: none; border-top: 1px solid #808080; }
.tab { width: 40px; background: #d2d2d2; border-right: 1px solid #808080; border-bottom: 1px solid #808080; display: flex; align-items: center; justify-content: center; }
.tab.on { width: 35px; background: #f7f7f7; border-bottom: 0; padding-right: 4px; }
.tab.rest { flex: 1; border: 0; background: #f7f7f7; align-items: flex-end; justify-content: flex-end; position: relative; margin-right: -1px; }
.tab.rest b { width: 19px; height: 19px; border: 1px solid #909090; border-right: 0; background: #f7f7f7; font: 10px/17px "DejaVu Sans", sans-serif; text-align: center; color: #000; }
.peek { position: absolute; left: 11px; top: 2px; width: 20px; height: 4px; background: linear-gradient(90deg, #2f6b8b 65%, #aaa 65%); }
.filter { height: 26px; flex: none; width: 230px; border: 1px solid #c6c6c6; border-left: 0; display: flex; align-items: center; }
.treewrap { display: flex; height: 803px; flex: none; margin-top: 1px; }
.tree { width: 218px; height: 803px; overflow: hidden; border-right: 1px solid #fff; border-bottom: 1px solid #fff; }
.tree li { height: 22px; display: flex; align-items: center; white-space: nowrap; position: relative; padding-left: 19px; }
.tree li > svg { width: 20px; height: 20px; margin-right: 4.500px; }
.tree li.ex::before { content: ""; position: absolute; left: 3px; top: 6px; border: 4px solid transparent; border-left-color: #555; border-right-width: 0; }
.tree li.root { padding-left: 0; letter-spacing: -.3px; }
.tree li.root > svg:first-child { margin-left: -4px; margin-right: 4px; }
.tree li.mat { letter-spacing: -.25px; }
.vbar { width: 15px; background: #f0f0f0; padding: 16px 0 0 7px; }
.vbar i { display: block; width: 2px; height: 659px; background: #878787; }
.hbar { height: 17px; flex: none; background: #f0f0f0; padding: 8px 0 0 11px; }
.hbar i { display: block; width: 166px; height: 2px; background: #878787; }
.grip.bottom { flex: 1; border-top: 1px solid #c0c0c0; border-bottom: 1px solid #c0c0c0; margin-top: 2px; }

.views { width: 1586px; height: 903px; display: grid; grid-template: 451px 4px 448px / 792px 4px 790px; background: #fff; position: relative; }
.pane { position: relative; overflow: hidden; background: #fefefe; }
.vs { background: linear-gradient(90deg, #666e92 1px, #e9ecf5 1px, #e9ecf5 3px, #363f5c 3px); }
.hs { grid-column: 1 / -1; background: linear-gradient(#5d668c 1px, #e9ecf5 1px, #d5d9e8 3px, #363f5c 3px); }
.model, .triad { position: absolute; overflow: visible; }
.ax { position: absolute; font: 9px/12px "Liberation Sans", sans-serif; letter-spacing: 0; width: 7px; text-align: center; }
.g { color: #168a20; } .r { color: #f22; } .b { color: #22e; }
.label { position: absolute; left: 12px; bottom: 1px; height: 18px; display: flex; align-items: center; gap: 4px; }
.pane:nth-child(3) .label, .pane:nth-child(7) .label { left: 15px; }
.label b { font: bold 13px/18px "Noto Sans", sans-serif; letter-spacing: -.65px; color: #151515; }
.pane:nth-child(7) .label b { margin-left: -1px; letter-spacing: -.6px; }
.toolbar { position: absolute; left: 219px; top: 5px; height: 22px; display: flex; align-items: center; gap: 6px; }
.toolbar .dd { width: 0; border: 3px solid transparent; border-top: 4px solid #999; margin: 1px 2px 0 0; border-bottom: 0; }
.toolbar .appear { margin: 0 -1px 0 0; }
.toolbar .scene { margin-right: 0; }
.knob { position: absolute; left: -1px; top: 432px; width: 9px; height: 39px; background: #f7f7f7; border: 1px solid #808080; border-left: 0; display: flex; align-items: center; justify-content: center; }
.sheets { height: 15px; flex: none; display: flex; background: #f7f7f7; border-top: 1px solid #808080; padding-left: 20px; }
.sh { height: 14px; line-height: 12px; padding-right: 8px; border-right: 1px solid #808080; background: #d3d3d3; letter-spacing: -.2px; white-space: nowrap; }
.sh.on { width: 57px; padding: 0 0 0 12px; background: #f7f7f7; font-weight: 700; letter-spacing: -.3px; }
.sh.s2 { width: 68px; padding: 0 0 0 10px; letter-spacing: -.4px; }
.sh.s3 { width: 108px; padding: 0 0 0 9px; }

.strip { width: 31px; flex: none; background: linear-gradient(#e2e2e2, #eee 50%, #fdfdfd); padding: 63px 0 0 5px; }
.stabs { border: 1px solid #808080; border-right: 0; }
.stabs span { height: 24px; display: flex; align-items: center; justify-content: center; background: #d4d4d4; border-bottom: 1px solid #808080; }
.stabs span:first-child { height: 23px; }
.stabs span:last-child { border: 0; height: 23px; }
.stabs .on { background: #f7f7f7; }

.task { width: 18px; overflow: hidden; border-left: 1px solid #808080; background: #f7f7f7; white-space: nowrap; }
.thead { height: 10px; background: #a9a9ad; border-bottom: 1px solid #111; }
.tback { height: 34px; margin-left: 3px; border-bottom: 1px solid #aaa; }
.mats { height: 220px; padding-top: 7px; margin-left: 3px; overflow: hidden; letter-spacing: -.1px; }
.mats li { height: 22px; padding-left: 2px; }
.mats li:first-child { padding-left: 1px; }
.mats .on { background: #cce8ff; border-top: 1px solid #1a85d8; border-bottom: 1px solid #1a85d8; line-height: 20px; }
.gap { height: 16px; background: #f0f0f0; margin-left: 3px; }
.bar { height: 6px; margin-left: 4px; background: linear-gradient(#8f96b4 2px, #d9dcea 2px, #d9dcea 4px, #5c6484 4px); }
.dlabel { height: 17px; line-height: 19px; padding-left: 8px; }
.tip { height: 49px; margin: 0 0 5px 8px; border: 1px solid #000; border-right: 0; background: #ffff80; padding: 2px 0 0 2px; line-height: 16px; }
.tip span { display: block; }
.bar.arrow::after { content: ""; display: block; margin-left: 9px; border: 4px solid transparent; border-top: 0; border-bottom: 5px solid #000; }

.status { height: 9px; overflow: hidden; border-top: 1px solid #808080; background: #f7f7f7; display: grid; grid-template-columns: 1414px 65px 43px 98px 179px 80px; white-space: nowrap; line-height: 18px; padding-top: 2px; }
.st0 { margin-left: -14px; }
```
